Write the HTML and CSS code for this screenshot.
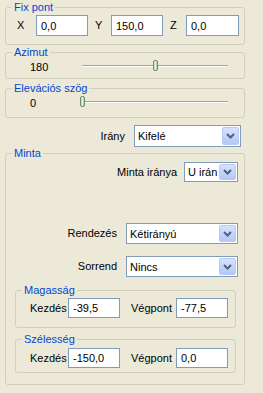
FILE: index.html
```html
<!DOCTYPE html>
<html lang="hu">
<head>
    <meta charset="UTF-8">
    <meta name="viewport" content="width=device-width, initial-scale=1.0">
    <title>Minta beállítások</title>
    <link rel="stylesheet" href="styles.css">
</head>
<body>
    <div class="panel">
        <fieldset class="group fix">
            <legend>Fix pont</legend>
            <div class="coords">
                <label>X</label><input type="text" value="0,0">
                <label>Y</label><input type="text" value="150,0">
                <label>Z</label><input type="text" value="0,0">
            </div>
        </fieldset>

        <fieldset class="group azimut">
            <legend>Azimut</legend>
            <div class="slider-row">
                <span class="value">180</span>
                <div class="slider">
                    <div class="track"></div>
                    <div class="thumb" style="left: 50%"></div>
                </div>
            </div>
        </fieldset>

        <fieldset class="group elevacio">
            <legend>Elevációs szög</legend>
            <div class="slider-row">
                <span class="value">0</span>
                <div class="slider">
                    <div class="track"></div>
                    <div class="thumb" style="left: 0%"></div>
                </div>
            </div>
        </fieldset>

        <div class="field-row irany">
            <label>Irány</label>
            <div class="combo wide">
                <span class="text">Kifelé</span>
                <span class="arrow"><svg width="9" height="6" viewBox="0 0 9 6"><path d="M1 1l3.5 3.5L8 1" fill="none" stroke="#4d6185" stroke-width="2"/></svg></span>
            </div>
        </div>

        <fieldset class="group minta">
            <legend>Minta</legend>
            <div class="field-row minta-irany">
                <label>Minta iránya</label>
                <div class="combo small">
                    <span class="text">U irán</span>
                    <span class="arrow"><svg width="9" height="6" viewBox="0 0 9 6"><path d="M1 1l3.5 3.5L8 1" fill="none" stroke="#4d6185" stroke-width="2"/></svg></span>
                </div>
            </div>
            <div class="field-row rendezes">
                <label>Rendezés</label>
                <div class="combo">
                    <span class="text">Kétirányú</span>
                    <span class="arrow"><svg width="9" height="6" viewBox="0 0 9 6"><path d="M1 1l3.5 3.5L8 1" fill="none" stroke="#4d6185" stroke-width="2"/></svg></span>
                </div>
            </div>
            <div class="field-row sorrend">
                <label>Sorrend</label>
                <div class="combo">
                    <span class="text">Nincs</span>
                    <span class="arrow"><svg width="9" height="6" viewBox="0 0 9 6"><path d="M1 1l3.5 3.5L8 1" fill="none" stroke="#4d6185" stroke-width="2"/></svg></span>
                </div>
            </div>

            <fieldset class="group inner magassag">
                <legend>Magasság</legend>
                <div class="range">
                    <label>Kezdés</label><input type="text" value="-39,5">
                    <label>Végpont</label><input type="text" value="-77,5">
                </div>
            </fieldset>

            <fieldset class="group inner szelesseg">
                <legend>Szélesség</legend>
                <div class="range">
                    <label>Kezdés</label><input type="text" value="-150,0">
                    <label>Végpont</label><input type="text" value="0,0">
                </div>
            </fieldset>
        </fieldset>
    </div>
</body>
</html>
```

FILE: styles.css
```css
html, body {
    margin: 0;
    background-color: #ece9d8;
}
body {
    font-family: "Liberation Sans", Arial, sans-serif;
    font-size: 11px;
    color: #000;
}
.panel {
    width: 240px;
    padding: 1px 0 0 5px;
}
.group {
    margin: 0;
    padding: 0;
    border: 1px solid #d0d0bf;
    border-radius: 3px;
    min-width: 0;
}
.group legend {
    margin-left: 6px;
    padding: 0 2px;
    color: #0046d5;
    line-height: 13px;
}
input {
    box-sizing: border-box;
    height: 21px;
    margin: 0;
    padding: 0 4px;
    border: 1px solid #7f9db9;
    background-color: #fff;
    font-family: inherit;
    font-size: 11px;
    color: #000;
    width: 100%;
}
label {
    line-height: 13px;
}

/* Fix pont */
.fix {
    padding-bottom: 8px;
}
.coords {
    display: grid;
    grid-template-columns: 19px 52px 23px 52px 23px 53px;
    align-items: center;
    padding: 1px 0 0 11px;
}
.coords label + input + label {
    padding-left: 7px;
}

/* sliders */
.azimut {
    margin-top: 1px;
    padding-bottom: 3px;
}
.elevacio {
    margin-top: 3px;
    padding-bottom: 6px;
}
.slider-row {
    display: flex;
    align-items: center;
    height: 16px;
    padding-left: 24px;
}
.slider-row .value {
    width: 52px;
}
.slider {
    position: relative;
    width: 146px;
    height: 16px;
}
.track {
    position: absolute;
    left: 0;
    right: 0;
    top: 6px;
    height: 1px;
    background-color: #a5a497;
    border-bottom: 1px solid #fff;
    border-radius: 1px;
}
.thumb {
    position: absolute;
    top: 1px;
    width: 5px;
    height: 11px;
    margin-left: -2px;
    box-sizing: border-box;
    border: 1px solid #6f8f6a;
    border-radius: 2px;
    background: linear-gradient(to right, #b9d3b4, #eef5ec 50%, #9fbf99);
}

/* label + combo rows */
.field-row {
    display: flex;
    justify-content: flex-end;
    align-items: center;
    gap: 9px;
}
.combo {
    box-sizing: border-box;
    display: flex;
    align-items: center;
    width: 112px;
    height: 21px;
    padding: 1px;
    border: 1px solid #7f9db9;
    background-color: #fff;
}
.combo .text {
    flex: 1;
    padding-left: 2px;
    overflow: hidden;
    white-space: nowrap;
}
.combo .arrow {
    box-sizing: border-box;
    display: flex;
    align-items: center;
    justify-content: center;
    width: 17px;
    height: 100%;
    border: 1px solid #b9c9ef;
    border-radius: 2px;
    background: linear-gradient(#d6e2fd, #b4c8f6);
}
.irany {
    margin: 7px 4px 0 0;
}
.irany .combo {
    width: 107px;
    height: 22px;
}

/* Minta */
.minta {
    padding-bottom: 11px;
}
.minta .field-row {
    padding-right: 6px;
}
.minta-irany {
    margin-top: 2px;
    gap: 7px;
}
.combo.small {
    width: 54px;
    height: 20px;
}
.rendezes {
    margin-top: 41px;
}
.sorrend {
    margin-top: 12px;
}
.inner {
    margin: 7px 8px 0 9px;
}
.range {
    display: grid;
    grid-template-columns: 38px 52px 56px 52px;
    align-items: center;
    padding: 1px 0 0 14px;
}
.range input {
    height: 20px;
}
.range input + label {
    padding-left: 11px;
}
.magassag {
    padding-bottom: 9px;
}
.szelesseg {
    margin-top: 5px;
    padding-bottom: 4px;
}
.szelesseg .range {
    padding-top: 2px;
}
```
